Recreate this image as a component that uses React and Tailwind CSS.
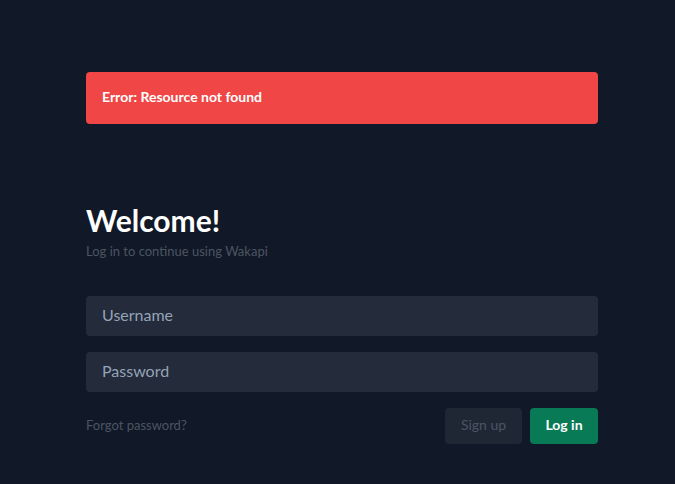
import React from 'react';

const App = () => {
  return (
    <div
      className="min-h-[484px] w-full bg-[#111827] pt-[72px]"
      style={{ fontFamily: '"Source Sans Pro", Lato, "Liberation Sans", sans-serif' }}
    >
      <div className="ml-[86px] w-[512px]">
        <div className="flex h-[52px] items-center rounded bg-[#f04646] px-4 pb-[2px] text-sm font-bold text-white">
          Error: Resource not found
        </div>

        <div className="mt-[78px]">
          <h1 className="text-[30px] font-bold leading-[36px] text-white">Welcome!</h1>
          <p className="mt-[4px] text-[13px] text-[#4b5563]">Log in to continue using Wakapi</p>
        </div>

        <form className="mt-[34px] flex flex-col gap-4" onSubmit={(e) => e.preventDefault()}>
          <input
            type="text"
            placeholder="Username"
            className="h-10 w-full rounded bg-[#242b3a] px-4 pb-[2px] text-base text-gray-300 placeholder-[#94a3b8] outline-none"
          />
          <input
            type="password"
            placeholder="Password"
            className="h-10 w-full rounded bg-[#242b3a] px-4 pb-[2px] text-base text-gray-300 placeholder-[#94a3b8] outline-none"
          />

          <div className="flex items-center justify-between">
            <a href="#" className="text-[13px] text-[#4b5563]">Forgot password?</a>
            <div className="flex gap-2">
              <button
                type="button"
                className="h-9 w-[77px] rounded bg-[#1f2735] pb-[2px] text-sm text-[#4b5563]"
              >
                Sign up
              </button>
              <button
                type="submit"
                className="h-9 w-[68px] rounded bg-[#087a55] pb-[2px] text-sm font-bold text-white"
              >
                Log in
              </button>
            </div>
          </div>
        </form>
      </div>
    </div>
  );
};

export default App;
